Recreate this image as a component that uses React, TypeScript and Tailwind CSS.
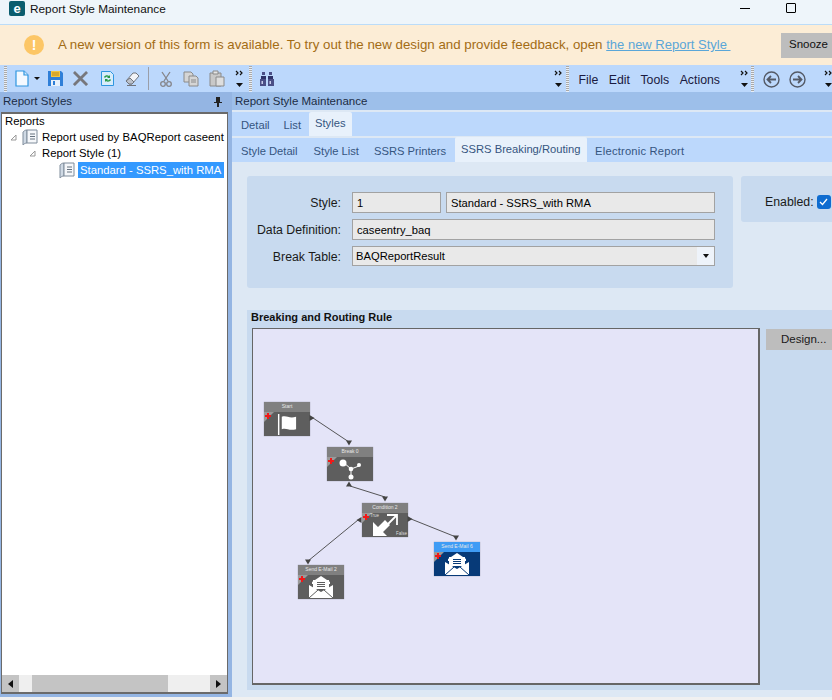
import React from 'react';

const Grip = () => <div className="h-[26px] w-[3px] shrink-0 bg-[repeating-linear-gradient(to_bottom,#a9a9a9_0,#a9a9a9_1px,#e8eef6_1px,#e8eef6_2px)]" />;

const More = () => (
  <div className="flex w-[12px] shrink-0 flex-col items-center justify-center gap-[7px]">
    <svg width="9" height="6" viewBox="0 0 9 6" fill="none" stroke="#111" strokeWidth="1.2">
      <path d="M1 1l2 2-2 2M5 1l2 2-2 2" />
    </svg>
    <svg width="7" height="4" viewBox="0 0 7 4"><path d="M0 0h7L3.500 4z" fill="#111" /></svg>
  </div>
);

const BookIcon = () => (
  <svg className="shrink-0" width="16" height="17" viewBox="0 0 16 17" fill="none">
    <path d="M1 3c1-1 2-2 4-2v13c-2 0-3 1-4 2z" fill="#cfd9e4" stroke="#7f8c9b" />
    <path d="M5 1h10v13H5z" fill="#f5f7fa" stroke="#7f8c9b" />
    <path d="M8 5h5M8 7.500h5M8 10h5" stroke="#66727f" />
  </svg>
);

const Toolbar = () => (
  <div className="flex h-[27px] items-center bg-[#bcd8fc] pl-[4px] text-[12.300px] text-[#1a1a40]">
    <Grip />
    <div className="flex items-center pl-[8px]">
      <svg width="14" height="17" viewBox="0 0 14 17" fill="#f4f9ff" stroke="#2f96e0" strokeWidth="1.200">
        <path d="M1 1h8l4 4v11H1z" />
        <path d="M9 1v4h4" fill="#cfe6fa" />
      </svg>
      <svg className="ml-[5px]" width="6" height="3" viewBox="0 0 6 3"><path d="M0 0h6L3 3z" fill="#111" /></svg>
    </div>
    <svg className="ml-[7px]" width="17" height="17" viewBox="0 0 17 17">
      <path d="M1 1h13l2 2v13H1z" fill="#2f7fd8" />
      <path d="M4 1h9v6H4z" fill="#f4c542" />
      <path d="M5 3h7M5 5h7" stroke="#b98a1a" />
      <path d="M4 10h9v6H4z" fill="#e8f1fb" />
      <path d="M6 11h2v4H6z" fill="#2f7fd8" />
    </svg>
    <svg className="ml-[9px]" width="15" height="15" viewBox="0 0 16 16" stroke="#77777c" strokeWidth="3">
      <path d="M1 1l14 14M15 1L1 15" />
    </svg>
    <svg className="ml-[13px]" width="13" height="15" viewBox="0 0 13 15">
      <path d="M.5.5h9l3 3v11H.5z" fill="#d7ecfb" stroke="#2f96e0" />
      <path d="M3 6c1-2 4-2 5-1l1-1v3H6l1-1c-1-.5-2-.5-3 1zM10 9c-1 2-4 2-5 1l-1 1V8h3l-1 1c1 .5 2 .5 3-1z" fill="#2a9a48" />
    </svg>
    <svg className="ml-[11px]" width="15" height="14" viewBox="0 0 15 14">
      <path d="M1 9l7-8h3l3 3-7 8H4z" fill="#f2f4f8" stroke="#70747c" />
      <path d="M1 9l3 3h3l2-2-4-4z" fill="#bcc2cc" stroke="#70747c" />
      <path d="M2 13.500h9" stroke="#70747c" />
    </svg>
    <div className="ml-[8px] h-[23px] w-px bg-[#9a9ea8]" />
    <svg className="ml-[11px]" width="12" height="16" viewBox="0 0 12 16" fill="none" stroke="#85858a" strokeWidth="1.300">
      <path d="M2 1l6 9M10 1L4 10" />
      <circle cx="3" cy="13" r="2.300" />
      <circle cx="9" cy="13" r="2.300" />
    </svg>
    <svg className="ml-[11px]" width="16" height="16" viewBox="0 0 16 16" fill="#d5d5d5" stroke="#8a8a8a">
      <path d="M1 1h7l2 2v8H1z" />
      <path d="M6 5h7l2 2v8H6z" />
      <path d="M8 9h5M8 11h5" />
    </svg>
    <svg className="ml-[10px]" width="16" height="17" viewBox="0 0 16 17" fill="#c8c8c8" stroke="#8a8a8a">
      <path d="M1 3h11v13H1z" />
      <path d="M4 1h5v3H4z" fill="#e4e4e4" />
      <path d="M7 7h8v9H7z" fill="#dedede" />
    </svg>
    <div className="ml-[8px]"><More /></div>
    <div className="ml-[4px]"><Grip /></div>
    <svg className="ml-[7px]" width="16" height="14" viewBox="0 0 16 14" fill="#4b4f86">
      <path d="M3 0h3v3H3zM10 0h3v3h-3z" />
      <path d="M2 4h5v3H2zM9 4h5v3H9z" fill="#2f3368" />
      <path d="M1 7h6v7H1zM9 7h6v7H9z" />
      <path d="M2.500 9h1.500v3H2.500zM10.500 9h1.500v3h-1.500z" fill="#c9cdea" />
    </svg>
    <div className="flex-1" />
    <More />
    <div className="ml-[2px]"><Grip /></div>
    <div className="ml-[9px] flex gap-[10.500px] pt-[3px] leading-none">
      <span>File</span>
      <span>Edit</span>
      <span>Tools</span>
      <span>Actions</span>
    </div>
    <div className="ml-[18px]"><More /></div>
    <div className="ml-[1px]"><Grip /></div>
    <svg className="ml-[9px] mt-[1px]" width="17" height="17" viewBox="0 0 17 17" fill="none" stroke="#545a66" strokeWidth="1.400">
      <circle cx="8.500" cy="8.500" r="7.500" />
      <path d="M13 8.500H5M8 5L4.500 8.500 8 12" strokeWidth="1.800" />
    </svg>
    <svg className="ml-[9px] mt-[1px]" width="17" height="17" viewBox="0 0 17 17" fill="none" stroke="#545a66" strokeWidth="1.400">
      <circle cx="8.500" cy="8.500" r="7.500" />
      <path d="M4 8.500h8M9 5l3.500 3.500L9 12" strokeWidth="1.800" />
    </svg>
    <div className="-mr-[2px] ml-[16px] w-[12px] shrink-0"><More /></div>
  </div>
);

const TreePanel = () => (
  <div className="flex w-[232px] shrink-0 flex-col bg-[#94b5e3]">
    <div className="flex h-[18px] items-center justify-between pl-[3px] pr-[10px] pt-[1px] text-[11.500px] text-[#1c2c44]">
      <span>Report Styles</span>
      <svg width="8" height="10" viewBox="0 0 8 10" fill="#222">
        <path d="M2 0h4v5h2v1H5v4H3V6H0V5h2z" />
      </svg>
    </div>
    <div className="mb-[3px] ml-px mr-[4px] mt-[2px] flex min-h-0 flex-1 flex-col border-2 border-x border-[#6a6a6a] bg-white">
      <div className="flex-1 overflow-hidden pl-[3px] pr-[2px] text-[11.300px] text-black">
        <div className="flex h-[15px] items-center">Reports</div>
        <div className="flex h-[16px] items-center">
          <svg className="ml-[5px] shrink-0" width="7" height="7" viewBox="0 0 7 7" fill="none" stroke="#999"><path d="M6 1v5H1z" /></svg>
          <span className="ml-[5px]"><BookIcon /></span>
          <span className="ml-[4px] whitespace-nowrap tracking-[0.05px]">Report used by BAQReport caseent</span>
        </div>
        <div className="flex h-[17px] items-center">
          <svg className="ml-[24px] shrink-0" width="7" height="7" viewBox="0 0 7 7" fill="none" stroke="#999"><path d="M6 1v5H1z" /></svg>
          <span className="ml-[6px]">Report Style (1)</span>
        </div>
        <div className="flex h-[16px] items-center">
          <span className="ml-[54px]"><BookIcon /></span>
          <span className="ml-[3px] flex h-[16px] w-[146px] shrink-0 items-center whitespace-nowrap bg-[#3399ff] pl-[2px] text-white">Standard - SSRS_with RMA</span>
        </div>
      </div>
      <div className="flex h-[17px] items-stretch bg-[#efefef]">
        <div className="flex w-[17px] items-center justify-center bg-[#c4c4c4]">
          <svg width="5" height="8" viewBox="0 0 5 8"><path d="M5 0v8L0 4z" fill="#111" /></svg>
        </div>
        <div className="w-[13px]" />
        <div className="w-[136px] bg-[#c4c4c4]" />
        <div className="flex-1" />
        <div className="flex w-[17px] items-center justify-center bg-[#c4c4c4]">
          <svg width="5" height="8" viewBox="0 0 5 8"><path d="M0 0v8l5-4z" fill="#111" /></svg>
        </div>
      </div>
    </div>
  </div>
);

const Tab = ({ label, active, className }: { label: string; active?: boolean; className?: string }) => (
  <div
    className={`flex items-center whitespace-nowrap text-[11.200px] text-[#35557f] ${active ? 'rounded-t-[2px] bg-[#e8f1fb] pb-[1px]' : 'pt-[3px]'} ${className ?? ''}`}
  >
    {label}
  </div>
);

const Field = ({ value, className }: { value: string; className?: string }) => (
  <div className={`flex h-[21px] items-center border border-[#a2a2a2] bg-[#e9e9e9] pl-[4px] pt-px text-[11.200px] text-black ${className ?? ''}`}>{value}</div>
);

const Label = ({ text, className }: { text: string; className?: string }) => (
  <div className={`w-[96px] whitespace-nowrap pr-[2px] text-right text-[12.300px] leading-none text-[#1a1a1a] ${className ?? ''}`}>{text}</div>
);

const Mail = () => (
  <svg width="26" height="22" viewBox="0 0 26 22">
    <path d="M13 0l9 6v2H4V6z" fill="#fff" />
    <path d="M5 4h16v9H5z" fill="#fff" />
    <path d="M9 6.500h8M9 8.500h8M9 10.500h8" stroke="currentColor" strokeWidth="1.200" />
    <path d="M1 9l12 7 12-7v13H1z" fill="#fff" />
    <path d="M1 22l9-8M25 22l-9-8" stroke="currentColor" />
  </svg>
);

type NodeProps = {
  title: string;
  left: string;
  top: string;
  header: string;
  body: string;
  children: React.ReactNode;
};

// nodes sit on a free canvas, so they keep their own coordinates
const FlowNode = ({ title, left, top, header, body, children }: NodeProps) => (
  <div className={`absolute flex h-[34px] w-[46px] flex-col shadow-[0_0_1px_#8a8a9a] ${left} ${top} ${body}`}>
    <div className={`h-[10px] truncate text-center text-[5px] leading-[9px] text-[#e8e8e8] ${header}`}>{title}</div>
    <div className="relative flex flex-1 items-center justify-center">
      <div className="absolute left-0 top-0 h-0 w-0 border-r-[10px] border-t-[10px] border-r-transparent border-t-[#9a9a9a]" />
      <svg className="absolute left-[1px] top-[1px]" width="6" height="6" viewBox="0 0 6 6" fill="#f01818">
        <path d="M2 0h2v2h2v2H4v2H2V4H0V2h2z" />
      </svg>
      {children}
    </div>
  </div>
);

const Arrow = ({ x, y, angle }: { x: number; y: number; angle: number }) => (
  <path transform={`translate(${x} ${y}) rotate(${angle})`} d="M-3-2.500h6L0 2.500z" fill="#444" stroke="none" />
);

const Diagram = () => (
  <div className="relative flex-1 border border-b-2 border-r-2 border-[#666] bg-[#e4e4f8]">
    <FlowNode title="Start" left="left-[11px]" top="top-[73px]" header="bg-[#808080]" body="bg-[#5e5e5e]">
      <svg width="21" height="21" viewBox="0 0 22 22">
        <path d="M1 0h1.500v22H1z" fill="#fff" />
        <path d="M5 3c5-2 7 2 15 0v13c-8 2-10-2-15 0z" fill="#fff" />
      </svg>
    </FlowNode>
    <FlowNode title="Break 0" left="left-[74px]" top="top-[118px]" header="bg-[#808080]" body="bg-[#5e5e5e]">
      <svg width="24" height="22" viewBox="0 0 24 22">
        <path d="M5 4l8 7 8-3M13 11v8" stroke="#fff" strokeWidth="1" fill="none" />
        <circle cx="5" cy="5" r="3.500" fill="#fff" />
        <circle cx="21" cy="7" r="2" fill="#fff" />
        <circle cx="13" cy="11" r="2.300" fill="#fff" />
        <circle cx="13" cy="19" r="2.500" fill="#fff" />
      </svg>
    </FlowNode>
    <FlowNode title="Condition 2" left="left-[109px]" top="top-[174px]" header="bg-[#808080]" body="bg-[#5e5e5e]">
      <svg width="26" height="23" viewBox="0 0 26 23">
        <path d="M15 1h10v10M24 2L13 13" fill="none" stroke="#fff" strokeWidth="1.800" />
        <path d="M1 8v14h14l-4-4 7-7-5-5-7 7z" fill="#fff" />
      </svg>
      <span className="absolute left-[8px] top-[1px] text-[4.500px] leading-none text-[#ddd]">True</span>
      <span className="absolute bottom-[1px] right-[1px] text-[4.500px] leading-none text-[#ddd]">False</span>
    </FlowNode>
    <FlowNode title="Send E-Mail 2" left="left-[45px]" top="top-[236px]" header="bg-[#808080]" body="bg-[#5e5e5e] text-[#5e5e5e]">
      <Mail />
    </FlowNode>
    <FlowNode title="Send E-Mail 6" left="left-[181px]" top="top-[213px]" header="bg-[#3f9cf5]" body="bg-[#073a78] text-[#073a78]">
      <Mail />
    </FlowNode>
    <svg className="absolute inset-0 h-full w-full" fill="none" stroke="#444" strokeWidth="0.900">
      <path d="M60 89l36 24" />
      <path d="M97 157l35 11" />
      <path d="M105 191l-50 41" />
      <path d="M158 190l45 18" />
      <Arrow x={59} y={89} angle={-90} />
      <Arrow x={96} y={114} angle={0} />
      <Arrow x={96} y={155} angle={180} />
      <Arrow x={132} y={170} angle={0} />
      <Arrow x={106} y={191} angle={90} />
      <Arrow x={157} y={190} angle={-90} />
      <Arrow x={203} y={209} angle={0} />
      <Arrow x={55} y={233} angle={0} />
    </svg>
  </div>
);

const MainPanel = () => (
  <div className="flex min-w-0 flex-1 flex-col bg-[#dde8f4]">
    <div className="flex h-[18px] items-center bg-[#9dbfea] pl-[3px] pt-[1px] text-[11.500px] text-[#1c2c44]">Report Style Maintenance</div>
    <div className="mt-[2px] flex h-[24px] items-end bg-[#bcd8fc] pl-[9px]">
      <Tab label="Detail" className="h-[24px]" />
      <Tab label="List" className="ml-[14px] h-[24px]" />
      <Tab label="Styles" active className="ml-[8px] h-[24px] px-[6px]" />
    </div>
    <div className="mt-[2px] flex h-[24px] items-end bg-[#bcd8fc] pl-[9px]">
      <Tab label="Style Detail" className="h-[24px]" />
      <Tab label="Style List" className="ml-[16px] h-[24px]" />
      <Tab label="SSRS Printers" className="ml-[15px] h-[24px]" />
      <Tab label="SSRS Breaking/Routing" active className="ml-[9px] h-[25px] w-[132px] pl-[6px]" />
      <Tab label="Electronic Report" className="ml-[8px] h-[24px] tracking-[0.2px]" />
    </div>
    <div className="flex flex-1 flex-col overflow-hidden pb-[7px] pl-[15px] pt-[14px]">
      <div className="flex items-start gap-[8px]">
        <div className="flex h-[112px] w-[486px] shrink-0 flex-col gap-[6px] rounded-[3px] bg-[#c8daef] pt-[16px]">
          <div className="flex items-center gap-[9px]">
            <Label text="Style:" className="mt-[2px]" />
            <div className="flex gap-[5px]">
              <Field value="1" className="w-[89px]" />
              <Field value="Standard - SSRS_with RMA" className="w-[269px]" />
            </div>
          </div>
          <div className="flex items-center gap-[9px]">
            <Label text="Data Definition:" className="mt-[1px]" />
            <Field value="caseentry_baq" className="w-[363px]" />
          </div>
          <div className="flex items-center gap-[9px]">
            <Label text="Break Table:" className="mt-[3px]" />
            <div className="flex h-[20px] w-[363px] items-center justify-between border border-[#a2a2a2] bg-[#e9e9e9] pl-[3px] text-[11.200px] text-black">
              BAQReportResult
              <div className="flex h-full w-[17px] items-center justify-center bg-[#eef3fa]">
                <svg width="6" height="4" viewBox="0 0 6 4"><path d="M0 0h6L3 4z" fill="#111" /></svg>
              </div>
            </div>
          </div>
        </div>
        <div className="flex h-[46px] flex-1 items-center rounded-l-[3px] bg-[#c8daef] pl-[24px] pt-[6px]">
          <span className="text-[12.300px] text-[#1a1a1a]">Enabled:</span>
          <div className="ml-[3px] flex h-[14px] w-[14px] shrink-0 items-center justify-center rounded-[3px] bg-[#0f6cd0]">
            <svg width="9" height="8" viewBox="0 0 9 8" fill="none" stroke="#fff" strokeWidth="1.300"><path d="M1 4l2.500 2.500L8 1" /></svg>
          </div>
        </div>
      </div>
      <div className="mt-[22px] flex min-h-0 flex-1 flex-col bg-[#c8daef] pb-[5px] pl-[5px]">
        <div className="-ml-px h-[18px] text-[11px] font-bold leading-[14px] text-[#111]">Breaking and Routing Rule</div>
        <div className="flex flex-1">
          <Diagram />
          <div className="ml-[6px] mt-px h-[21px] w-[66px] shrink-0 bg-[#bdbdbd] pl-[15px] pt-[1px] text-[11.500px] leading-[19px] text-[#1a1a1a]">Design...</div>
        </div>
      </div>
    </div>
  </div>
);

export default function App() {
  return (
    <div className="flex h-[700px] w-[832px] flex-col overflow-hidden bg-[#f0f0f0] font-['Liberation_Sans',sans-serif]">
      <div className="flex h-[25px] shrink-0 items-start border-b border-[#bbdcf8] bg-[#eef5fa] pl-[9px] pt-[1px]">
        <div className="flex h-[15px] w-[16px] items-center justify-center rounded-[2px] bg-[#0b5d6e]">
          <span className="text-[13px] font-bold leading-none text-white">e</span>
        </div>
        <span className="ml-[5px] mt-px text-[11.800px] leading-[15px] text-[#111]">Report Style Maintenance</span>
        <div className="ml-auto mt-[2px] flex items-center">
          <div className="h-px w-[10px] bg-black" />
          <div className="ml-[36px] mr-[36px] h-[10px] w-[10px] rounded-[1px] border border-black" />
        </div>
      </div>
      <div className="flex h-[40px] shrink-0 items-center bg-[#fcedd6] pl-[24px]">
        <div className="flex h-[20px] w-[20px] shrink-0 items-center justify-center rounded-full bg-[#fcc666] text-[14px] font-bold leading-none text-white">!</div>
        <span className="ml-[14px] whitespace-nowrap text-[13.300px] text-[#a36c14]">
          A new version of this form is available. To try out the new design and provide feedback, open{' '}
          <span className="text-[13px] text-[#5aa6d8] underline">the new Report Style&nbsp;</span>
        </span>
        <div className="ml-auto flex h-[25px] w-[51px] shrink-0 items-center bg-[#bdbdbd] pl-[8px] text-[11.500px] text-[#111]">Snooze</div>
      </div>
      <Toolbar />
      <div className="flex min-h-0 flex-1">
        <TreePanel />
        <MainPanel />
      </div>
      <div className="h-[3px] shrink-0 bg-[#f0f0f0]" />
    </div>
  );
}
